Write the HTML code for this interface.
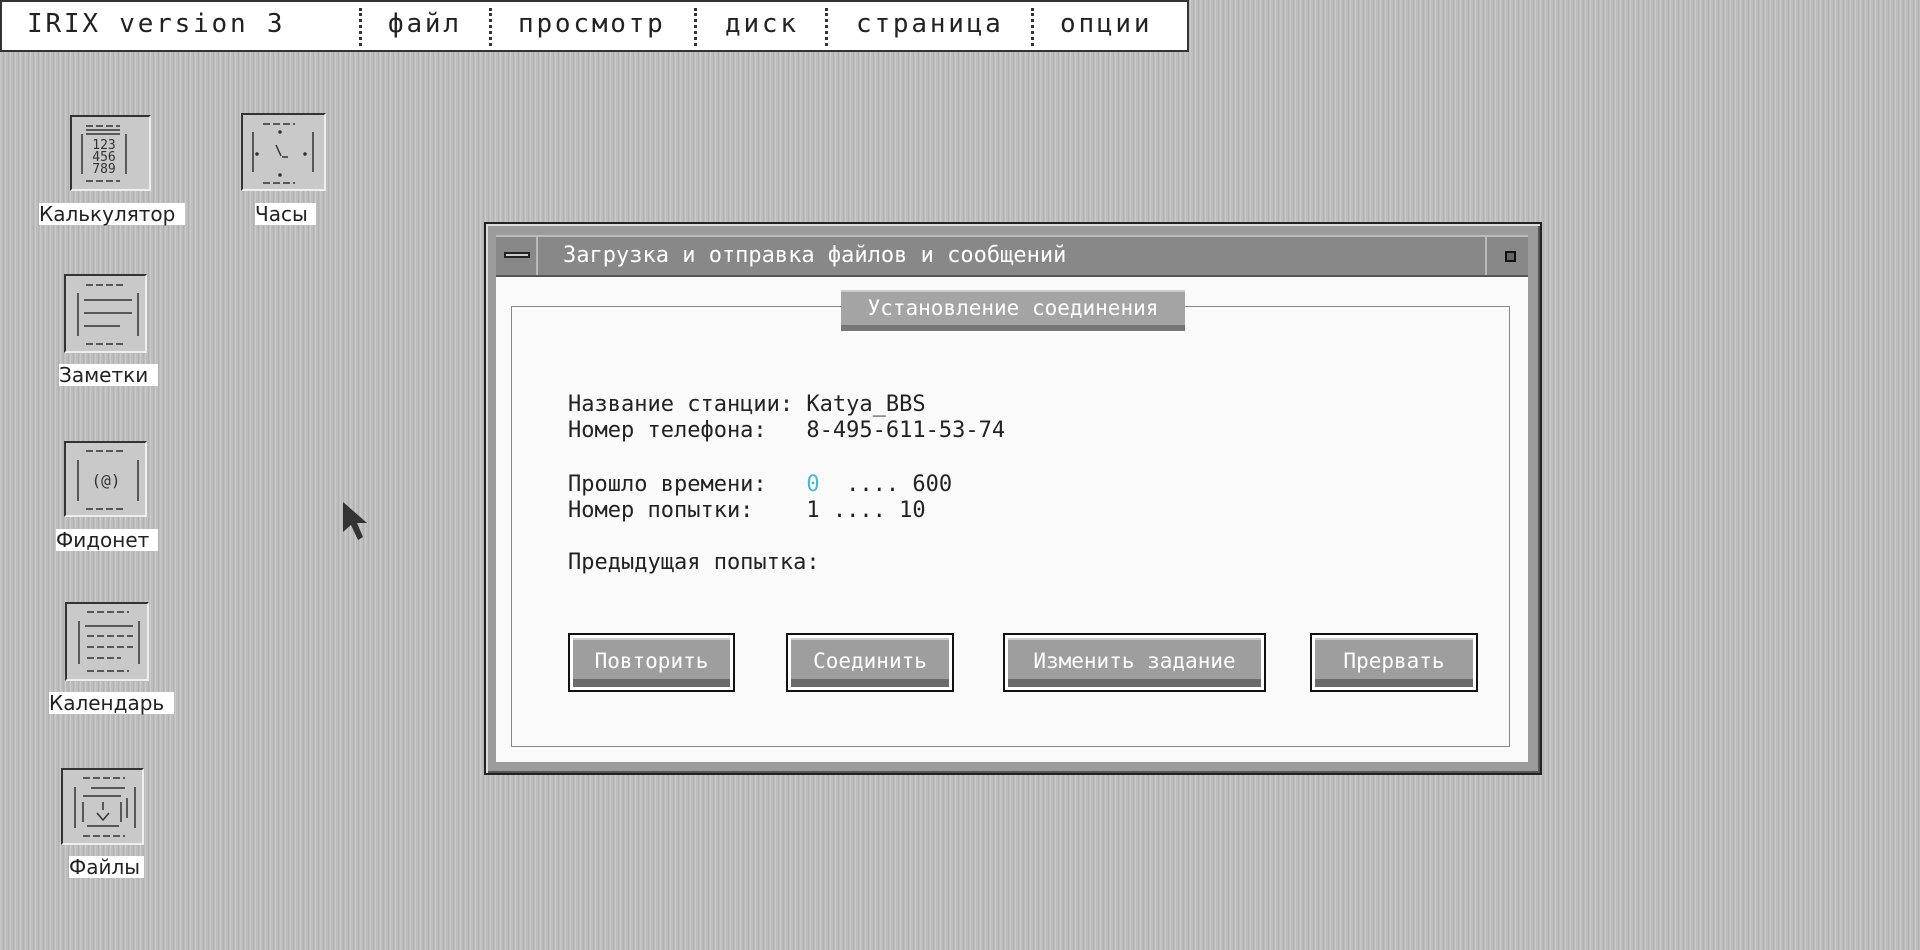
<!DOCTYPE html>
<html><head><meta charset="utf-8"><style>
html,body{margin:0;padding:0}
body{width:1920px;height:950px;overflow:hidden;position:relative;
background-color:#bdbdbd;
background-image:repeating-linear-gradient(90deg,rgba(255,255,255,.2) 0 1px,rgba(0,0,0,0) 1px 3px,rgba(0,0,0,.06) 3px 4px,rgba(0,0,0,0) 4px 5px);
font-family:"Liberation Mono","DejaVu Sans Mono",monospace;color:#222}
.abs{position:absolute}
#menu{left:0;top:0;width:1185px;height:48px;background:#fff;border:2px solid #333;}
#menu span{position:absolute;top:7px;letter-spacing:2.8px;color:#222;white-space:nowrap;font-family:"DejaVu Sans Mono",monospace;font-size:26px}
.sep{position:absolute;top:6px;width:0;height:38px;border-left:3px dotted #333}
.icon{position:absolute;background:#c9c9c9;border-top:2px solid #333;border-left:2px solid #333;border-right:2px solid #eee;border-bottom:2px solid #eee;box-sizing:border-box}
.lab{position:absolute;background:#fff;font-family:"DejaVu Sans",sans-serif;font-size:20px;line-height:22px;color:#222;white-space:nowrap}
#win{left:484px;top:222px;width:1058px;height:553px;box-sizing:border-box;background:#9c9c9c;border:2px solid #222;box-shadow:inset 2px 2px 0 #ddd,inset -2px -2px 0 #555}
#title{left:496px;top:235px;width:1032px;height:42px;background:#888;box-sizing:border-box;border-top:2px solid #bbb;border-bottom:2px solid #555}
#body{left:496px;top:277px;width:1032px;height:485px;background:#fafafa}
#grp{left:511px;top:306px;width:999px;height:441px;box-sizing:border-box;border:1px solid #888}
#legend{left:841px;top:290px;width:344px;height:41px;background:#a4a4a4;box-sizing:border-box;border-top:2px solid #ccc;border-bottom:6px solid #777;color:#fff;font-size:21px;text-align:center;line-height:32px;font-family:"DejaVu Sans Mono",monospace}
.t{position:absolute;left:568px;font-size:22px;white-space:pre;font-family:"DejaVu Sans Mono",monospace;color:#222}
.btn{position:absolute;top:633px;height:59px;box-sizing:border-box;border:2px solid #111;background:#fff;padding:3px}
.btn div{height:100%;box-sizing:border-box;background:#9e9e9e;border-bottom:8px solid #6a6a6a;border-top:2px solid #ccc;color:#fff;text-align:center;font-size:21px;line-height:42px;font-family:"DejaVu Sans Mono",monospace}
</style></head><body>
<div id="menu" class="abs">
<span style="left:25px">IRIX version 3</span>
<div class="sep" style="left:357px"></div><span style="left:386px">файл</span>
<div class="sep" style="left:487px"></div><span style="left:516px">просмотр</span>
<div class="sep" style="left:692px"></div><span style="left:723px">диск</span>
<div class="sep" style="left:823px"></div><span style="left:854px">страница</span>
<div class="sep" style="left:1029px"></div><span style="left:1058px">опции</span>
</div>

<div class="icon" style="left:70px;top:115px;width:81px;height:76px">
<svg width="77" height="72" style="position:absolute;left:0;top:0" stroke="#333" stroke-width="1.5"><line x1="14" y1="9" x2="48" y2="9" stroke-dasharray="7 3"/><line x1="14" y1="13" x2="48" y2="13"/><line x1="14" y1="17" x2="48" y2="17"/><line x1="10" y1="17" x2="10" y2="57"/><line x1="54" y1="17" x2="54" y2="57"/><line x1="14" y1="64" x2="48" y2="64" stroke-dasharray="7 3"/>
<text x="32" y="32" font-size="13" text-anchor="middle" stroke="none" fill="#333" font-family="DejaVu Sans Mono">123</text><text x="32" y="44" font-size="13" text-anchor="middle" stroke="none" fill="#333" font-family="DejaVu Sans Mono">456</text><text x="32" y="56" font-size="13" text-anchor="middle" stroke="none" fill="#333" font-family="DejaVu Sans Mono">789</text></svg></div>
<div class="lab" style="left:39px;top:203px;width:146px">Калькулятор</div>

<div class="icon" style="left:241px;top:113px;width:85px;height:78px">
<svg width="81" height="74" stroke="#333" stroke-width="1.5"><line x1="20" y1="9" x2="52" y2="9" stroke-dasharray="7 3"/><line x1="10" y1="17" x2="10" y2="57"/><line x1="70" y1="17" x2="70" y2="57"/><line x1="20" y1="68" x2="52" y2="68" stroke-dasharray="7 3"/><circle cx="37" cy="17" r="1" /><circle cx="37" cy="60" r="1"/><circle cx="14" cy="39" r="1"/><circle cx="62" cy="39" r="1"/><line x1="33" y1="30" x2="38" y2="41"/><line x1="39" y1="42" x2="45" y2="42"/></svg></div>
<div class="lab" style="left:255px;top:203px;width:61px">Часы</div>

<div class="icon" style="left:64px;top:274px;width:83px;height:79px">
<svg width="79" height="75" stroke="#333" stroke-width="1.5"><line x1="20" y1="9" x2="60" y2="9" stroke-dasharray="7 3"/><line x1="12" y1="17" x2="12" y2="60"/><line x1="72" y1="17" x2="72" y2="60"/><line x1="18" y1="24" x2="66" y2="24"/><line x1="18" y1="37" x2="66" y2="37"/><line x1="18" y1="50" x2="54" y2="50"/><line x1="20" y1="68" x2="60" y2="68" stroke-dasharray="7 3"/></svg></div>
<div class="lab" style="left:59px;top:364px;width:99px">Заметки</div>

<div class="icon" style="left:64px;top:441px;width:83px;height:76px">
<svg width="79" height="72" stroke="#333" stroke-width="1.5"><line x1="20" y1="8" x2="60" y2="8" stroke-dasharray="7 3"/><line x1="12" y1="17" x2="12" y2="58"/><line x1="72" y1="17" x2="72" y2="58"/><line x1="20" y1="66" x2="60" y2="66" stroke-dasharray="7 3"/><text x="40" y="43" font-size="16" text-anchor="middle" stroke="none" fill="#333" font-family="DejaVu Sans Mono">(@)</text></svg></div>
<div class="lab" style="left:56px;top:529px;width:102px">Фидонет</div>

<div class="icon" style="left:65px;top:602px;width:84px;height:79px">
<svg width="80" height="75" stroke="#333" stroke-width="1.5"><line x1="20" y1="8" x2="62" y2="8" stroke-dasharray="7 3"/><line x1="12" y1="17" x2="12" y2="60"/><line x1="72" y1="17" x2="72" y2="60"/><line x1="18" y1="22" x2="66" y2="22"/><line x1="20" y1="32" x2="66" y2="32" stroke-dasharray="7 3"/><line x1="20" y1="43" x2="66" y2="43" stroke-dasharray="7 3"/><line x1="20" y1="54" x2="54" y2="54" stroke-dasharray="7 3"/><line x1="20" y1="67" x2="62" y2="67" stroke-dasharray="7 3"/></svg></div>
<div class="lab" style="left:49px;top:692px;width:125px">Календарь</div>

<div class="icon" style="left:61px;top:768px;width:83px;height:77px">
<svg width="79" height="73" stroke="#333" stroke-width="1.5"><line x1="20" y1="8" x2="62" y2="8" stroke-dasharray="7 3"/><line x1="12" y1="17" x2="12" y2="58"/><line x1="72" y1="17" x2="72" y2="58"/><line x1="28" y1="18" x2="62" y2="18"/><line x1="20" y1="26" x2="58" y2="26"/><line x1="20" y1="32" x2="20" y2="52"/><line x1="64" y1="28" x2="64" y2="48"/><line x1="58" y1="32" x2="58" y2="52"/><line x1="40" y1="32" x2="40" y2="40"/><polyline points="34,43 40,50 46,43" fill="none"/><line x1="24" y1="56" x2="56" y2="56"/><line x1="20" y1="66" x2="62" y2="66" stroke-dasharray="7 3"/></svg></div>
<div class="lab" style="left:69px;top:856px;width:75px">Файлы</div>

<svg class="abs" style="left:341px;top:500px" width="30" height="48"><path d="M2 2 L2 32 L10 25 L17 40 L22 37 L16 23 L26 23 Z" fill="#333"/></svg>

<div id="win" class="abs"></div>
<div id="title" class="abs">
<div class="abs" style="left:0;top:0;width:42px;height:38px;border-right:2px solid #bbb;box-sizing:border-box"><div class="abs" style="left:8px;top:15px;width:26px;height:6px;border:2px solid #222;background:#ccc;box-sizing:border-box"></div></div>
<div class="abs" style="left:67px;top:6px;color:#fff;font-size:22px;font-family:'DejaVu Sans Mono',monospace;white-space:nowrap">Загрузка и отправка файлов и сообщений</div>
<div class="abs" style="left:989px;top:0;width:43px;height:38px;border-left:2px solid #bbb;box-sizing:border-box"><div class="abs" style="left:18px;top:14px;width:7px;height:7px;border:2px solid #111;background:#666"></div></div>
</div>
<div id="body" class="abs"></div>
<div id="grp" class="abs"></div>
<div id="legend" class="abs">Установление соединения</div>

<div class="t" style="top:392px">Название станции: Katya_BBS</div>
<div class="t" style="top:418px">Номер телефона:   8-495-611-53-74</div>
<div class="t" style="top:472px">Прошло времени:   <span style="color:#49b8d2">0</span>  .... 600</div>
<div class="t" style="top:498px">Номер попытки:    1 .... 10</div>
<div class="t" style="top:550px">Предыдущая попытка:</div>

<div class="btn" style="left:568px;width:167px"><div>Повторить</div></div>
<div class="btn" style="left:786px;width:168px"><div>Соединить</div></div>
<div class="btn" style="left:1003px;width:263px"><div>Изменить задание</div></div>
<div class="btn" style="left:1310px;width:168px"><div>Прервать</div></div>
</body></html>
